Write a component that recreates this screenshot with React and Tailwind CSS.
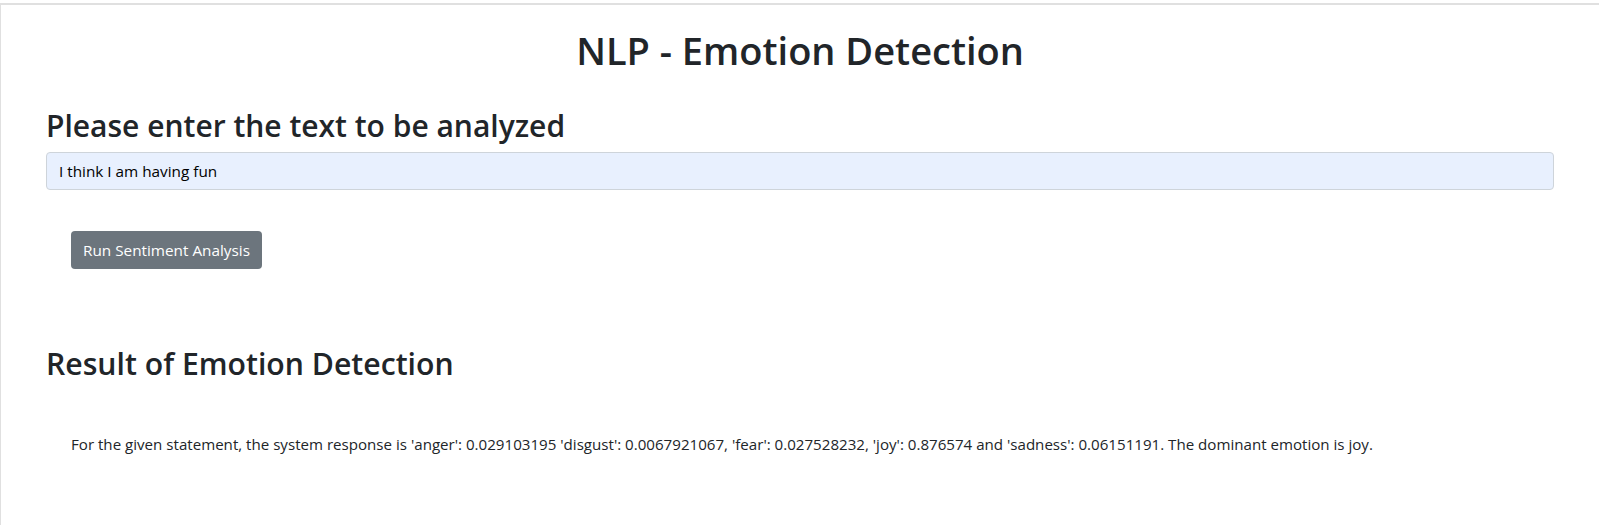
export default function App() {
  const result =
    "For the given statement, the system response is 'anger': 0.029103195 'disgust': 0.0067921067, 'fear': 0.027528232, 'joy': 0.876574 and 'sadness': 0.06151191. The dominant emotion is joy."

  return (
    <div className="min-h-[525px] bg-white pt-[3px] text-[#212529] font-['Segoe_UI','Open_Sans',sans-serif]">
      <div className="min-h-[522px] border-t-2 border-l border-[#e0e0e0] px-[45px]">
        <h1 className="mt-[21px] text-center text-[38px] font-semibold leading-[48px]">NLP - Emotion Detection</h1>

        <h2 className="mt-[33px] text-[30px] font-semibold leading-[38px]">Please enter the text to be analyzed</h2>
        <input
          type="text"
          defaultValue="I think I am having fun"
          className="mt-[7px] block h-[38px] w-full rounded border border-[#ced4da] bg-[#e8f0fe] px-3 text-[15.3px] text-black outline-none"
        />

        <button className="ml-[25px] mt-[41px] h-[38px] rounded bg-[#6c757d] px-3 text-[15.3px] text-white">
          Run Sentiment Analysis
        </button>

        <h2 className="mt-[76px] text-[30.2px] font-semibold leading-[38px]">Result of Emotion Detection</h2>
        <p className="ml-[25px] mt-[50px] text-[15.12px] leading-[22px]">{result}</p>
      </div>
    </div>
  )
}
